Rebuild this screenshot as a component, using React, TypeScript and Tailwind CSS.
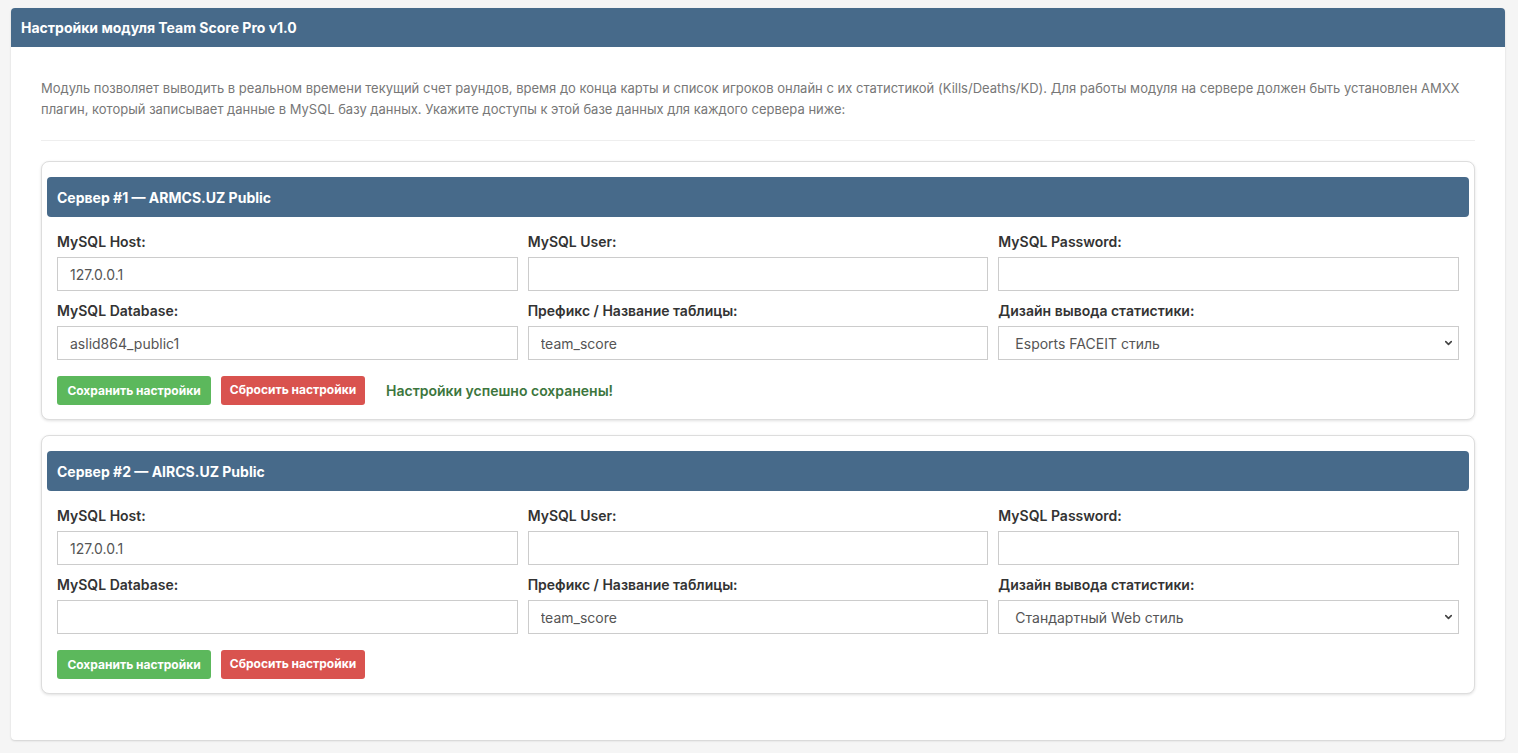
import { ChevronDown } from "lucide-react";

type Server = {
  id: number;
  name: string;
  host: string;
  user: string;
  password: string;
  database: string;
  table: string;
  design: string;
  saved?: boolean;
};

const SERVERS: Server[] = [
  {
    id: 1,
    name: "ARMCS.UZ Public",
    host: "127.0.0.1",
    user: "",
    password: "",
    database: "aslid864_public1",
    table: "team_score",
    design: "Esports FACEIT стиль",
    saved: true,
  },
  {
    id: 2,
    name: "AIRCS.UZ Public",
    host: "127.0.0.1",
    user: "",
    password: "",
    database: "",
    table: "team_score",
    design: "Стандартный Web стиль",
  },
];

const DESIGNS = ["Стандартный Web стиль", "Esports FACEIT стиль"];

function Field({ label, value, type = "text" }: { label: string; value: string; type?: string }) {
  return (
    <div className="flex flex-col">
      <label className="mb-[5px] text-[14px] leading-[20px] font-semibold text-[#333]">{label}</label>
      <input
        type={type}
        defaultValue={value}
        className="h-[34px] w-full border border-[#ccc] bg-white px-[12px] text-[14px] text-[#555] outline-none"
      />
    </div>
  );
}

function DesignSelect({ value }: { value: string }) {
  return (
    <div className="flex flex-col">
      <label className="mb-[5px] text-[14px] leading-[20px] font-semibold text-[#333]">
        Дизайн вывода статистики:
      </label>
      <div className="relative">
        <select
          defaultValue={value}
          className="h-[34px] w-full appearance-none border border-[#ccc] bg-white px-[16px] text-[14px] text-[#555] outline-none"
        >
          {DESIGNS.map((d) => (
            <option key={d}>{d}</option>
          ))}
        </select>
        <ChevronDown
          size={11}
          strokeWidth={3.5}
          className="pointer-events-none absolute right-[5px] top-1/2 -translate-y-1/2 text-[#444]"
        />
      </div>
    </div>
  );
}

function ServerCard({ server }: { server: Server }) {
  return (
    <section className="mb-[15px] rounded-[8px] border border-[#ddd] bg-white px-[5px] pt-[15px] pb-[14px] shadow-[0_1px_3px_rgba(0,0,0,0.12)]">
      <div className="flex h-[40px] items-center rounded-[4px] bg-[#476a8a] px-[10px] text-[14px] font-bold text-white">
        Сервер #{server.id} — {server.name}
      </div>
      <div className="px-[10px]">
        <div className="mt-[15px] grid grid-cols-3 gap-x-[10px] gap-y-[10px]">
          <Field label="MySQL Host:" value={server.host} />
          <Field label="MySQL User:" value={server.user} />
          <Field label="MySQL Password:" value={server.password} type="password" />
          <Field label="MySQL Database:" value={server.database} />
          <Field label="Префикс / Название таблицы:" value={server.table} />
          <DesignSelect value={server.design} />
        </div>
        <div className="mt-[16px] flex items-center gap-[10px]">
          <button
            type="button"
            className="h-[29px] w-[154px] rounded-[3px] bg-[#5cb85c] text-[12px] font-bold text-white"
          >
            Сохранить настройки
          </button>
          <button
            type="button"
            className="h-[29px] w-[144px] rounded-[3px] bg-[#d9534f] pb-[2px] text-[12px] font-bold text-white"
          >
            Сбросить настройки
          </button>
          {server.saved ? (
            <span className="ml-[11px] text-[14px] font-semibold text-[#3c763d]">
              Настройки успешно сохранены!
            </span>
          ) : null}
        </div>
      </div>
    </section>
  );
}

export default function App() {
  return (
    <div className="min-h-[753px] bg-[#f5f5f5] pt-[8px] pb-[14px] font-['Inter',sans-serif]">
      <div className="ml-[11px] mr-[13px] rounded-[4px] bg-white shadow-[0_1px_2px_rgba(0,0,0,0.15)]">
        <div className="flex h-[39px] items-center rounded-t-[4px] bg-[#476a8a] px-[10px] text-[14px] font-bold text-white">
          Настройки модуля Team Score Pro v1.0
        </div>
        <div className="px-[30px] pt-[31px] pb-[31px]">
          <p className="text-[13px] leading-[21px] text-[#777]">
            Модуль позволяет выводить в реальном времени текущий счет раундов, время до конца карты и список
            игроков онлайн с их статистикой (Kills/Deaths/KD). Для работы модуля на сервере должен быть
            установлен AMXX плагин, который записывает данные в MySQL базу данных. Укажите доступы к этой базе
            данных для каждого сервера ниже:
          </p>
          <hr className="my-[20px] border-t border-[#eee]" />
          {SERVERS.map((s) => (
            <ServerCard key={s.id} server={s} />
          ))}
        </div>
      </div>
    </div>
  );
}
